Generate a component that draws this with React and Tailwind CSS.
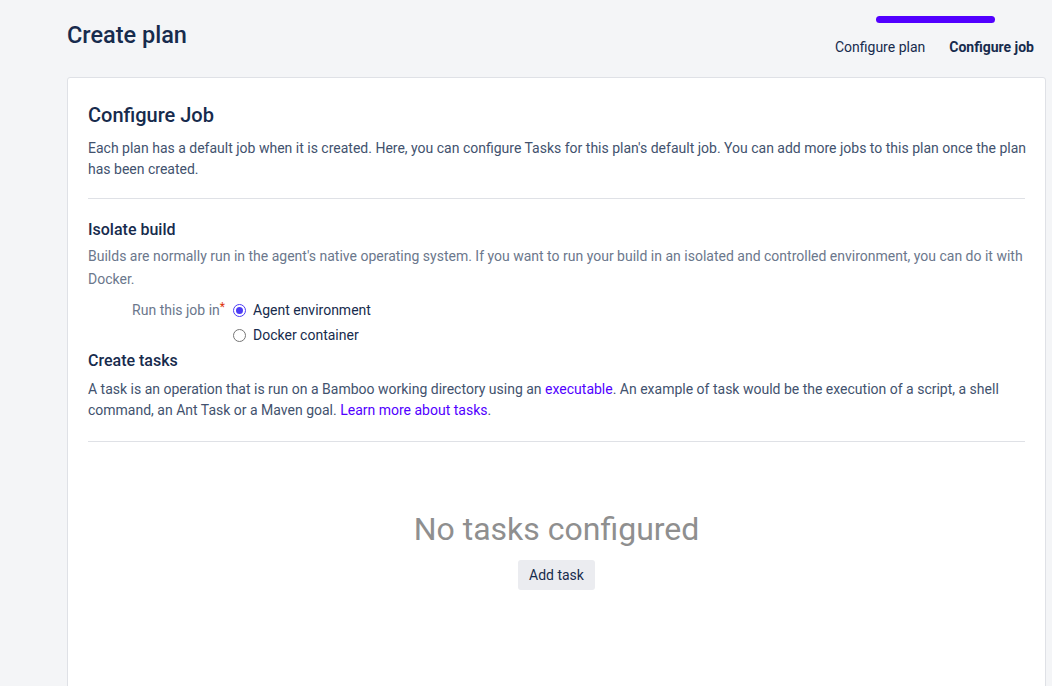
const Radio = ({ checked, label }) => (
  <label className="flex items-center gap-[7px] h-[25px] text-[14px] text-[#172b4d]">
    <span
      className={
        checked
          ? "w-[13px] h-[13px] rounded-full border border-[#4c3cf5] flex items-center justify-center"
          : "w-[13px] h-[13px] rounded-full border border-[#767676] bg-white"
      }
    >
      {checked && <span className="w-[7px] h-[7px] rounded-full bg-[#4c3cf5]" />}
    </span>
    {label}
  </label>
)

export default function App() {
  return (
    <div className="bg-[#f4f5f7] pl-[67px] pr-[6px] font-['Roboto',sans-serif] overflow-hidden h-[686px]">
      {/* header */}
      <div className="flex items-start justify-between h-[77px]">
        <h1 className="text-[23.5px] font-medium text-[#172b4d] mt-[20px] leading-[30px]">Create plan</h1>
        <div className="flex flex-col items-end pt-[16px] pr-[12px]">
          <div className="w-[119px] h-[7px] rounded-full bg-[#5200ff] mr-[39px]" />
          <div className="flex gap-[24px] mt-[15px] text-[14px] leading-[18px] text-[#172b4d]">
            <span>Configure plan</span>
            <span className="font-bold">Configure job</span>
          </div>
        </div>
      </div>

      {/* card */}
      <div className="bg-white border border-[#dfe1e6] rounded-[3px] px-[20px] pt-[24px] h-[640px]">
        <h2 className="text-[20px] font-medium text-[#172b4d] leading-[26px]">Configure Job</h2>
        <p className="mt-[10px] -mr-[6px] text-[14px] leading-[21px] text-[#42526e]">
          Each plan has a default job when it is created. Here, you can configure Tasks for this plan's default job. You can add more jobs to this plan once the plan has been created.
        </p>
        <div className="border-t border-[#dfe1e6] mt-[18px]" />

        <h3 className="mt-[20px] text-[16px] font-medium text-[#172b4d] leading-[22px]">Isolate build</h3>
        <p className="mt-[4px] text-[14px] leading-[23px] text-[#6b778c]">
          Builds are normally run in the agent's native operating system. If you want to run your build in an isolated and controlled environment, you can do it with Docker.
        </p>

        <div className="flex mt-[7px]">
          <div className="w-[145px] text-right pr-[8px] text-[14px] text-[#6b778c] h-[25px] leading-[25px]">
            Run this job in<span className="text-[#de350b] align-top text-[12px] leading-[18px]">*</span>
          </div>
          <div className="flex flex-col">
            <Radio checked label="Agent environment" />
            <Radio label="Docker container" />
          </div>
        </div>

        <h3 className="text-[16px] font-medium text-[#172b4d] leading-[22px] mt-[2px]">Create tasks</h3>
        <p className="mt-[7px] text-[14px] leading-[21px] text-[#42526e]">
          A task is an operation that is run on a Bamboo working directory using an{" "}
          <a className="text-[#5200ff]">executable</a>. An example of task would be the execution of a script, a shell command, an Ant Task or a Maven goal.{" "}
          <a className="text-[#5200ff]">Learn more about tasks</a>.
        </p>
        <div className="border-t border-[#dfe1e6] mt-[20px]" />

        <div className="flex flex-col items-center mt-[67px]">
          <div className="text-[32px] text-[#8f8f8f] leading-[40px]">No tasks configured</div>
          <button className="mt-[11px] h-[30px] px-[11px] rounded-[3px] bg-[#ebecf0] text-[14px] text-[#172b4d]">
            Add task
          </button>
        </div>
      </div>
    </div>
  )
}
